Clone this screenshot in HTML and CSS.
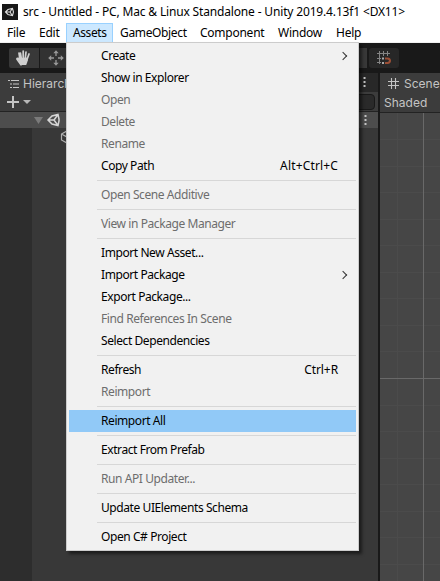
FILE: index.html
```
<!DOCTYPE html>
<html lang="en">
<head>
<meta charset="utf-8">
<title>src - Untitled - PC, Mac &amp; Linux Standalone - Unity 2019.4.13f1 &lt;DX11&gt;</title>
<link rel="stylesheet" href="styles.css">
</head>
<body>
<header class="titlebar">
  <svg class="app-icon" width="16" height="16" viewBox="0 0 16 16"><rect width="16" height="16" fill="#171717"/><path d="M3.5 8 6 5.500 10.500 4.300 11.500 8 10.500 11.700 6 10.500ZM3.500 8H8L10.500 4.300M8 8 10.500 11.700" fill="none" stroke="#ddd" stroke-width="1.1"/></svg>
  <span class="title">src - Untitled - PC, Mac &amp; Linux Standalone - Unity 2019.4.13f1 &lt;DX11&gt;</span>
</header>
<nav class="menubar">
  <span class="m-file">File</span><span class="m-edit">Edit</span><span class="m-assets">Assets</span><span class="m-go">GameObject</span><span class="m-comp">Component</span><span class="m-win">Window</span><span class="m-help">Help</span>
</nav>
<div class="toolbar">
  <div class="tool tool-hand">
    <svg width="16" height="16" viewBox="0 0 16 16"><path d="M5 14.8 1 9.2Q.8 8.2 2 8.3L4 10 3 3.2M5.2 8 4.4 3M7.2 8V1M9.3 8 10 2M11 9.5 13 4" fill="none" stroke="#d0d0d0" stroke-width="1.7" stroke-linecap="round"/><path d="M3.7 8 11.8 7.5V10.5Q11 13 10.2 15H5.2L2.8 11.5Z" fill="#d0d0d0"/></svg>
  </div>
  <div class="tool tool-move">
    <svg width="16" height="16" viewBox="0 0 16 16"><path d="M8 2V6M8 10V14M2 8H6M10 8H14" stroke="#999" stroke-width="1.3"/><path d="M5.3 3.2 8 .2 10.7 3.2ZM5.3 12.8 8 15.8 10.7 12.8ZM3.2 5.3.2 8 3.2 10.7ZM12.8 5.3 15.8 8 12.8 10.7Z" fill="#999"/></svg>
  </div>
  <div class="spacer"></div>
  <div class="tool tool-edge"></div>
  <div class="tool tool-snap">
    <svg width="16" height="16" viewBox="0 0 16 16"><path d="M1 3.500H14M1 8.500H5M3.500 1V14M7.500 1V6M11.500 1V6M1 12.500H5" fill="none" stroke="#858585"/><path d="M9 8.500H11.500Q14 8.800 14 10.800T11.500 13H9" fill="none" stroke="#9b4f36" stroke-width="2"/><path d="M6 7.500H8V9.500H6ZM6 12H8V14H6Z" fill="#aaa"/></svg>
  </div>
</div>
<main class="workspace">
  <section class="hierarchy">
    <div class="tab-row">
      <div class="tab">
        <svg width="11" height="10" viewBox="0 0 11 10"><path d="M0 1.500H2M3 1.500H11M2 5H4M5 5H11M2 8.500H4M5 8.500H11" stroke="#c4c4c4" stroke-width="1.1"/></svg>
        <span>Hierarchy</span>
      </div>
      <svg class="dots" width="3" height="11" viewBox="0 0 3 11"><path d="M.5 0h2v2h-2zM.5 4h2v2h-2zM.5 8h2v2h-2z" fill="#c4c4c4"/></svg>
    </div>
    <div class="search-row">
      <svg width="24" height="12" viewBox="0 0 24 12"><path d="M0 6H12M6 0V12" stroke="#c4c4c4" stroke-width="2"/><path d="M16 4H24L20 8Z" fill="#b8b8b8"/></svg>
      <div class="search"></div>
    </div>
    <div class="scene-row">
      <svg width="28" height="14" viewBox="0 0 28 14"><path d="M0 4H9L4.500 11Z" fill="#7a7a7a"/><path d="M14 7 18 3 24 1.500 25 6V8L24 12.500 18 11ZM14 7H20M20 7 24 1.500M20 7 24 12.500" fill="none" stroke="#d5d5d5" stroke-width="1.500"/></svg>
      <svg class="dots" width="3" height="11" viewBox="0 0 3 11"><path d="M.5 0h2v2h-2zM.5 4h2v2h-2zM.5 8h2v2h-2z" fill="#c4c4c4"/></svg>
    </div>
    <div class="tree">
      <div class="gutter"></div>
      <svg width="14" height="14" viewBox="0 0 14 14"><path d="M1.500 4 7 1 13 4V10L7 13 1.500 10ZM1.500 4 7 7 13 4M7 7V13" fill="none" stroke="#b0b0b0" stroke-width="1.200"/></svg>
    </div>
  </section>
  <section class="scene">
    <div class="scene-tab">
      <svg width="11" height="11" viewBox="0 0 11 11"><path d="M0 3.500H11M0 7.500H11M3.500 0V11M7.500 0V11" stroke="#c4c4c4" stroke-width="1.100"/></svg>
      <span>Scene</span>
    </div>
    <div class="shading"><span>Shaded</span></div>
    <svg class="grid" width="60" height="468" viewBox="0 0 60 468">
      <path d="M17.500 0V468M0 26.500H60M0 53.500H60M0 79.500H60M0 106.500H60M0 132.500H60M0 159.500H60M0 185.500H60M0 212.500H60M0 238.500H60M0 292.500H60M0 318.500H60M0 345.500H60M0 371.500H60M0 398.500H60M0 424.500H60M0 451.500H60" stroke="#4b4b4b"/>
      <path d="M43.500 0V468M0 265.500H60" stroke="#696969"/>
    </svg>
  </section>
</main>
<div class="menu">
  <div class="item"><span>Create</span><i class="arrow"></i></div>
  <div class="item"><span>Show in Explorer</span></div>
  <div class="item off"><span>Open</span></div>
  <div class="item off"><span>Delete</span></div>
  <div class="item off"><span>Rename</span></div>
  <div class="item"><span>Copy Path</span><kbd class="wide">Alt+Ctrl+C</kbd></div>
  <hr>
  <div class="item off"><span>Open Scene Additive</span></div>
  <hr>
  <div class="item off"><span>View in Package Manager</span></div>
  <hr>
  <div class="item"><span>Import New Asset...</span></div>
  <div class="item"><span>Import Package</span><i class="arrow"></i></div>
  <div class="item"><span>Export Package...</span></div>
  <div class="item off"><span>Find References In Scene</span></div>
  <div class="item"><span>Select Dependencies</span></div>
  <hr>
  <div class="item"><span>Refresh</span><kbd>Ctrl+R</kbd></div>
  <div class="item off"><span>Reimport</span></div>
  <hr>
  <div class="item active"><span>Reimport All</span></div>
  <hr>
  <div class="item"><span>Extract From Prefab</span></div>
  <hr>
  <div class="item off"><span>Run API Updater...</span></div>
  <hr>
  <div class="item"><span>Update UIElements Schema</span></div>
  <hr>
  <div class="item"><span>Open C# Project</span></div>
</div>
</body>
</html>
```
FILE: styles.css
```
* { box-sizing: border-box; }
body { margin: 0; width: 440px; height: 581px; overflow: hidden; display: flex; flex-direction: column; position: relative; background: #383838; font: 12px/16px "Noto Sans", "Open Sans", sans-serif; letter-spacing: -0.25px; color: #000; }
svg { display: block; flex: none; }
.titlebar { height: 23px; flex: none; background: #fff; display: flex; align-items: center; padding-left: 2px; gap: 5px; white-space: nowrap; letter-spacing: -0.16px; }
.menubar { height: 20px; flex: none; background: #fff; display: flex; border-bottom: 1px solid #f0f0f0; line-height: 19px; }
.menubar span { flex: none; white-space: nowrap; }
.m-file { width: 32px; padding-left: 7px; }
.m-edit { width: 34px; padding-left: 7px; }
.m-assets { width: 47px; height: 19px; padding-left: 6px; background: #cce8ff; border: 1px solid #99d1ff; border-bottom: 0; line-height: 18px; letter-spacing: -0.4px; }
.m-go { width: 80px; padding-left: 7px; letter-spacing: -0.35px; }
.m-comp { width: 78px; padding-left: 7px; }
.m-win { width: 58px; padding-left: 7px; }
.m-help { padding-left: 7px; }
.toolbar { height: 30px; flex: none; background: #191919; display: flex; padding: 5px 0 5px 9px; }
.tool { height: 20px; background: #323232; display: flex; align-items: center; justify-content: center; }
.tool-hand { width: 30px; border-radius: 2px 0 0 2px; margin-right: 1px; background: #383838; }
.tool-move { width: 32px; }
.spacer { flex: 1; }
.tool-edge { width: 24px; background: #383838; margin-right: 2px; }
.tool-snap { width: 30px; border-radius: 3px; margin-right: 41px; background: #272727; }
.workspace { flex: 1; display: flex; font: 12px/16px Inter, sans-serif; color: #c4c4c4; letter-spacing: 0; }
.hierarchy { width: 380px; border-right: 2px solid #191919; display: flex; flex-direction: column; }
.tab-row { height: 19px; flex: none; background: #282828; display: flex; justify-content: space-between; align-items: center; padding-right: 12px; }
.tab { width: 85px; height: 19px; background: #3c3c3c; display: flex; align-items: center; gap: 4px; padding: 2px 0 0 8px; }
.search-row { height: 20px; flex: none; background: #3c3c3c; border-bottom: 1px solid #232323; display: flex; justify-content: space-between; align-items: center; padding: 0 3px 0 7px; }
.search { width: 280px; height: 16px; background: #2a2a2a; border: 1px solid #191919; border-radius: 4px; }
.scene-row { height: 16px; flex: none; background: #4d4d4d; display: flex; justify-content: space-between; align-items: center; padding: 0 11px 0 34px; }
.tree { flex: 1; display: flex; background: #383838; }
.gutter { width: 32px; background: #2d2d2d; margin-right: 28px; }
.tree svg { margin-top: 2px; }
.scene { width: 60px; background: #464646; }
.scene-tab { height: 20px; background: #3c3c3c; display: flex; align-items: center; gap: 5px; padding: 1px 0 0 8px; }
.shading { height: 20px; background: #3c3c3c; padding: 2px 0 0 4px; border-bottom: 1px solid #232323; }
.menu { position: absolute; left: 66px; top: 42px; width: 293px; height: 509px; padding: 2px; background: #f1f1f1; border: 1px solid #ccc; box-shadow: 3px 3px 3px rgba(0,0,0,.5); letter-spacing: -0.42px; }
.item { height: 22px; display: flex; justify-content: space-between; align-items: center; padding: 0 18px 0 32px; white-space: nowrap; }
.off { color: #6d6d6d; }
.active { background: #91c9f7; }
kbd { font: inherit; letter-spacing: -0.1px; }
.wide { letter-spacing: 0.15px; }
.arrow { width: 6px; height: 6px; border: solid #333; border-width: 1px 1px 0 0; transform: rotate(45deg); margin-right: -8px; }
hr { height: 1px; border: 0; background: #d7d7d7; margin: 3px 0 3px 28px; }
```
